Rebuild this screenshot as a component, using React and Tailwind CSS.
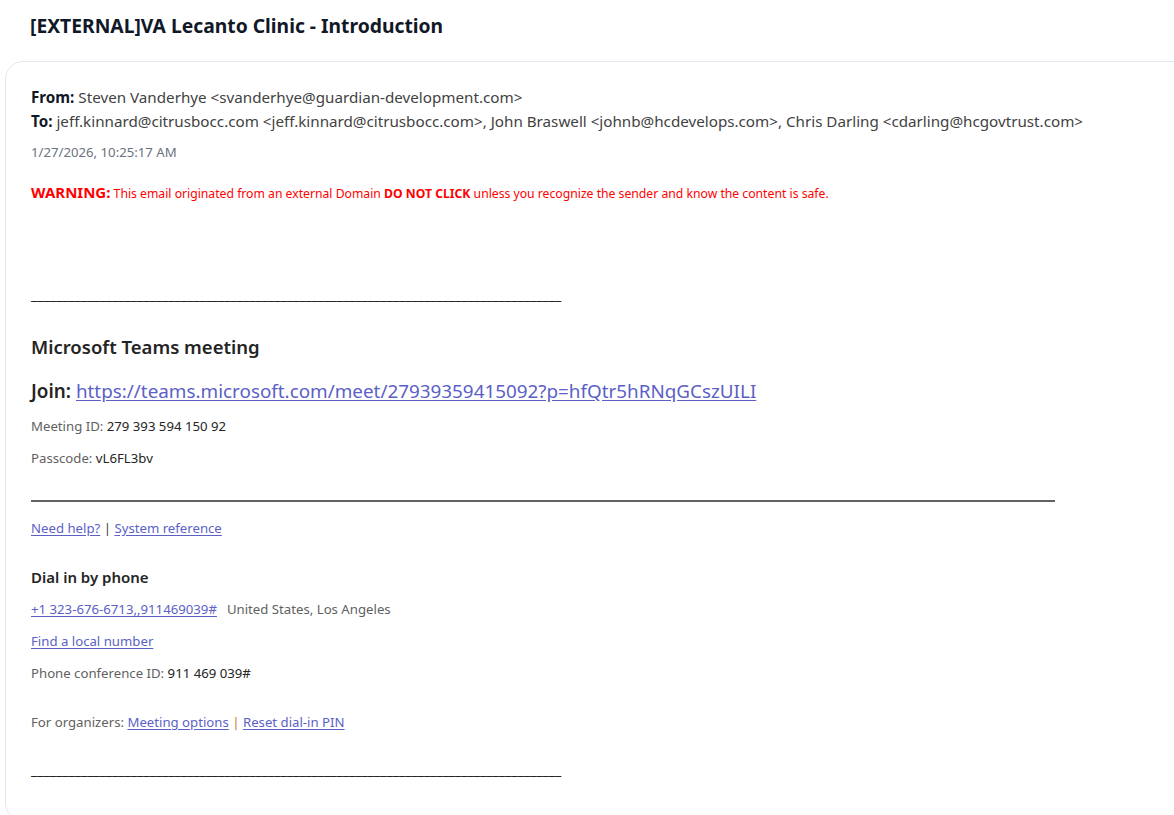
import React from 'react';

const Link = ({ children }) => (
    <a href="#" className="text-[#5b5fc7] underline underline-offset-2">
        {children}
    </a>
);

const Underscores = () => (
    <div className="whitespace-nowrap text-[#242424] text-[14.05px] leading-[18px]">
        {'_'.repeat(85)}
    </div>
);

const App = () => {
    return (
        <div className="min-h-screen bg-white font-['Noto_Sans',sans-serif] text-[#242424] overflow-hidden">
            <h1 className="pl-[30px] pt-[12px] h-[61px] text-[19.3px] font-bold text-[#111827] leading-[28px]">
                [EXTERNAL]VA Lecanto Clinic - Introduction
            </h1>

            <div className="ml-[5px] mr-[-20px] border border-[#e2e8f0] rounded-[18px] pl-[25px] pt-[23px] pb-[40px] min-h-[760px]">
                <div className="text-[15.2px] leading-[24px] text-[#424242] whitespace-nowrap">
                    <div>
                        <span className="font-bold text-[#111827]">From:</span> Steven Vanderhye &lt;svanderhye@guardian-development.com&gt;
                    </div>
                    <div>
                        <span className="font-bold text-[#111827]">To:</span> jeff.kinnard@citrusbocc.com &lt;jeff.kinnard@citrusbocc.com&gt;, John Braswell &lt;johnb@hcdevelops.com&gt;, Chris Darling &lt;cdarling@hcgovtrust.com&gt;
                    </div>
                </div>
                <div className="mt-[9px] text-[13.2px] leading-[20px] text-[#6b7280]">1/27/2026, 10:25:17 AM</div>

                <div className="mt-[20px] text-[12.2px] leading-[20px] text-[#ff0000]">
                    <span className="text-[15px] font-bold">WARNING:</span> This email originated from an external Domain{' '}
                    <span className="font-bold">DO NOT CLICK</span> unless you recognize the sender and know the content is safe.
                </div>

                <div className="mt-[82px]">
                    <Underscores />
                </div>

                <div className="mt-[30px] text-[18.5px] font-semibold leading-[26px] text-[#242424]">Microsoft Teams meeting</div>

                <div className="mt-[18px] text-[18.85px] leading-[26px] whitespace-nowrap">
                    <span className="font-semibold text-[#242424]">Join:</span>{' '}
                    <Link>https://teams.microsoft.com/meet/27939359415092?p=hfQtr5hRNqGCszUILI</Link>
                </div>

                <div className="mt-[13px] text-[13.2px] leading-[18px] text-[#616161]">
                    Meeting ID: <span className="text-[#242424]">279 393 594 150 92</span>
                </div>
                <div className="mt-[14px] text-[13.2px] leading-[18px] text-[#616161]">
                    Passcode: <span className="text-[#242424]">vL6FL3bv</span>
                </div>

                <div className="mt-[33px] w-[1024px] h-[2px] bg-[#616161]"></div>

                <div className="mt-[17px] text-[13.2px] leading-[18px] text-[#616161]">
                    <Link>Need help?</Link> <span className="text-[#424242]">|</span> <Link>System reference</Link>
                </div>

                <div className="mt-[29px] text-[15px] font-semibold leading-[22px] text-[#242424]">Dial in by phone</div>

                <div className="mt-[12px] text-[13.2px] leading-[18px] text-[#616161]">
                    <Link>+1 323-676-6713,,911469039#</Link>
                    <span className="ml-[10px]">United States, Los Angeles</span>
                </div>
                <div className="mt-[14px] text-[13.2px] leading-[18px]">
                    <Link>Find a local number</Link>
                </div>
                <div className="mt-[14px] text-[13.2px] leading-[18px] text-[#616161]">
                    Phone conference ID: <span className="text-[#242424]">911 469 039#</span>
                </div>

                <div className="mt-[31px] text-[13.2px] leading-[18px] text-[#616161]">
                    For organizers: <Link>Meeting options</Link> <span className="text-[#c27a2c]">|</span> <Link>Reset dial-in PIN</Link>
                </div>

                <div className="mt-[30px]">
                    <Underscores />
                </div>
            </div>
        </div>
    );
};

export default App;
